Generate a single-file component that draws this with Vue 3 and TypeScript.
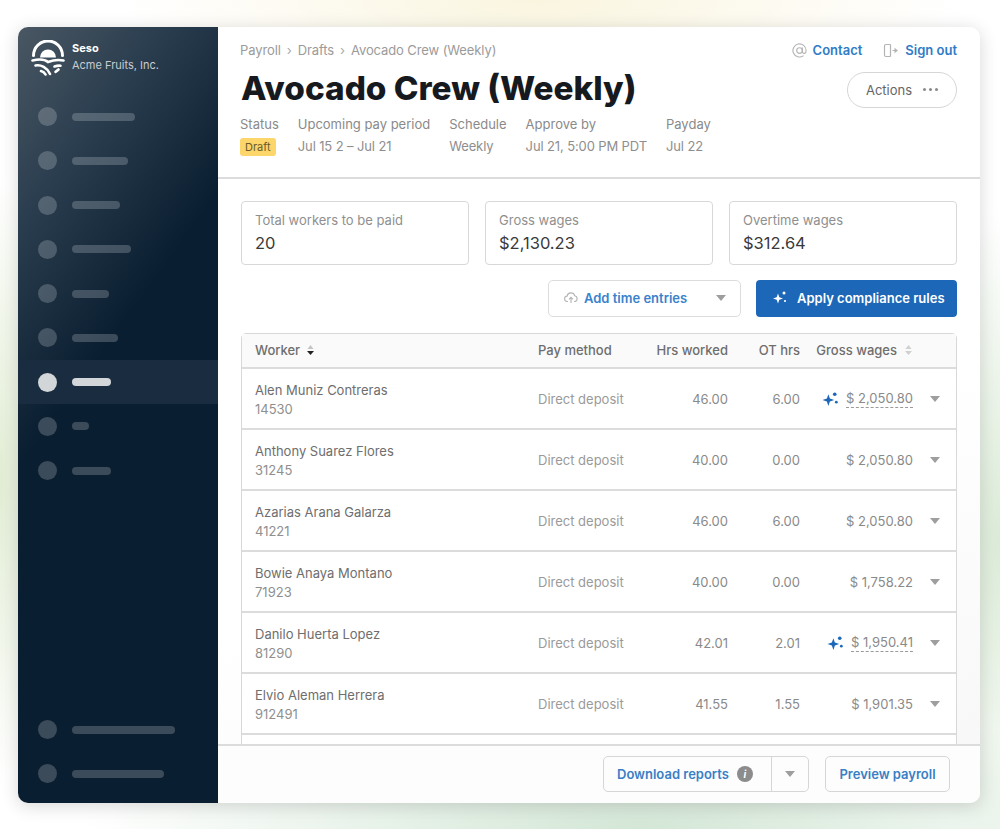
<script setup lang="ts">
const navTop = [63, 56, 48, 59, 37, 46, 39, 17, 39]
const navBottom = [103, 92]
const meta = [
  { label: 'Upcoming pay period', value: 'Jul 15 2 – Jul 21' },
  { label: 'Schedule', value: 'Weekly' },
  { label: 'Approve by', value: 'Jul 21, 5:00 PM PDT' },
  { label: 'Payday', value: 'Jul 22' },
]
const stats = [
  { label: 'Total workers to be paid', value: '20' },
  { label: 'Gross wages', value: '$2,130.23' },
  { label: 'Overtime wages', value: '$312.64' },
]
const rows = [
  { name: 'Alen Muniz Contreras', id: '14530', hrs: '46.00', ot: '6.00', gross: '$ 2,050.80', ai: true },
  { name: 'Anthony Suarez Flores', id: '31245', hrs: '40.00', ot: '0.00', gross: '$ 2,050.80', ai: false },
  { name: 'Azarias Arana Galarza', id: '41221', hrs: '46.00', ot: '6.00', gross: '$ 2,050.80', ai: false },
  { name: 'Bowie Anaya Montano', id: '71923', hrs: '40.00', ot: '0.00', gross: '$ 1,758.22', ai: false },
  { name: 'Danilo Huerta Lopez', id: '81290', hrs: '42.01', ot: '2.01', gross: '$ 1,950.41', ai: true },
  { name: 'Elvio Aleman Herrera', id: '912491', hrs: '41.55', ot: '1.55', gross: '$ 1,901.35', ai: false },
]
</script>

<template>
  <div class="page">
    <div class="card">
      <aside class="side">
        <div class="brand">
          <svg class="logo" width="34" height="36" viewBox="0 0 34 36" fill="none" stroke="#fff" stroke-width="2.600" stroke-linecap="round">
            <path d="M2.500 15.500A14.500 14.500 0 0 1 31.500 15.500" stroke-width="3" />
            <path d="M9 17.500A8 8 0 0 1 25 17.500Z" fill="#fff" stroke="none" />
            <path d="M1.500 20.500C8 19 14 19.500 17 22C21 20.500 27 19.500 32.500 20.500" />
            <path d="M4.500 25.500C10 24.500 16 27.500 19 34" />
            <path d="M10 31C12 31.500 13.500 32.500 14.500 34.500" />
            <path d="M23.500 26.500C25.500 25.800 27.500 25.500 29.500 25.700" />
            <path d="M24.500 31.800C25.800 31 26.800 30.200 27.500 29.500" />
          </svg>
          <div class="brand-text">
            <div class="brand-name">Seso</div>
            <div class="brand-org">Acme Fruits, Inc.</div>
          </div>
        </div>
        <nav class="nav">
          <div v-for="(w, i) in navTop" :key="i" class="nav-item" :class="{ active: i === 6 }">
            <span class="dot"></span>
            <span class="bar" :style="{ width: w + 'px' }"></span>
          </div>
        </nav>
        <div class="nav nav-bottom">
          <div v-for="(w, i) in navBottom" :key="i" class="nav-item">
            <span class="dot"></span>
            <span class="bar" :style="{ width: w + 'px' }"></span>
          </div>
        </div>
      </aside>

      <main class="main">
        <header class="head">
          <div class="head-left">
            <div class="crumbs">
              <span>Payroll</span><i>›</i><span>Drafts</span><i>›</i><span>Avocado Crew (Weekly)</span>
            </div>
            <h1 class="title">Avocado Crew (Weekly)</h1>
            <div class="meta">
              <div class="meta-col">
                <div class="meta-label">Status</div>
                <span class="badge">Draft</span>
              </div>
              <div v-for="m in meta" :key="m.label" class="meta-col">
                <div class="meta-label">{{ m.label }}</div>
                <div class="meta-value">{{ m.value }}</div>
              </div>
            </div>
          </div>
          <div class="head-right">
            <div class="links">
              <span class="link">
                <svg width="15" height="15" viewBox="0 0 16 16" fill="none" stroke="#b4b4b4" stroke-width="1.200">
                  <circle cx="8" cy="8" r="3" />
                  <path d="M11 5v4a2 2 0 0 0 3.500 1.300C15 9 15 8.500 15 8a7 7 0 1 0-3 5.700" stroke-linecap="round" />
                </svg>
                <b>Contact</b>
              </span>
              <span class="link">
                <svg width="16" height="15" viewBox="0 0 16 15" fill="none" stroke="#b4b4b4" stroke-width="1.200">
                  <path d="M7.500 1.500H3a1.500 1.500 0 0 0-1.500 1.500v9A1.500 1.500 0 0 0 3 13.500h4.500" />
                  <path d="M7.500 1.500v12" />
                  <path d="M9.500 7.500h3" />
                  <path d="M11.500 4.800l3.500 2.700-3.500 2.700z" fill="#b4b4b4" stroke="none" />
                </svg>
                <b>Sign out</b>
              </span>
            </div>
            <button class="actions">
              <span>Actions</span>
              <span class="dots"><i></i><i></i><i></i></span>
            </button>
          </div>
        </header>

        <div class="body">
          <div class="stats">
            <div v-for="s in stats" :key="s.label" class="stat">
              <div class="stat-label">{{ s.label }}</div>
              <div class="stat-value">{{ s.value }}</div>
            </div>
          </div>

          <div class="toolbar">
            <button class="btn-add">
              <svg width="14" height="13" viewBox="0 0 14 13" fill="none" stroke="#b4b4b4" stroke-width="1.100">
                <path d="M4 10.500H3.500a2.700 2.700 0 0 1-.4-5.400 3.900 3.900 0 0 1 7.600-.3 2.900 2.900 0 0 1 .1 5.700H10" />
                <path d="M7 12V6.500M5 8.300 7 6.300l2 2" />
              </svg>
              <b>Add time entries</b>
              <span class="caret add-caret"></span>
            </button>
            <button class="btn-apply">
              <svg class="spark" width="16" height="15" viewBox="0 0 16 15" fill="#fff">
                <path d="M6 3.500 7.300 7.200 11 8.500 7.300 9.800 6 13.500 4.700 9.800 1 8.500 4.700 7.200z" />
                <circle cx="12" cy="3" r="1.500" />
                <circle cx="13" cy="11" r="1.100" />
              </svg>
              <span>Apply compliance rules</span>
            </button>
          </div>

          <div class="table">
            <div class="tr th">
              <div class="worker-h">
                Worker
                <svg width="9" height="12" viewBox="0 0 9 12"><path d="M4.500 1 7.500 5h-6z" fill="#c4c4c4" /><path d="M4.500 11 1 7h7z" fill="#222" /></svg>
              </div>
              <div>Pay method</div>
              <div class="num">Hrs worked</div>
              <div class="num">OT hrs</div>
              <div class="gross-h">
                Gross wages
                <svg width="9" height="12" viewBox="0 0 9 12"><path d="M4.500 1 7.500 5h-6z" fill="#d0d0d0" /><path d="M4.500 11 1 7h7z" fill="#d0d0d0" /></svg>
              </div>
              <div></div>
            </div>
            <div v-for="r in rows" :key="r.id" class="tr td">
              <div class="w-cell">
                <div class="w-name">{{ r.name }}</div>
                <div class="w-id">{{ r.id }}</div>
              </div>
              <div class="pay">Direct deposit</div>
              <div class="num val">{{ r.hrs }}</div>
              <div class="num val">{{ r.ot }}</div>
              <div class="gross">
                <svg v-if="r.ai" class="spark-b" width="17" height="16" viewBox="0 0 16 15" fill="#1c67b8">
                  <path d="M6 3 7.400 7.100 11.500 8.500 7.400 9.900 6 14 4.600 9.900.5 8.500 4.600 7.100z" />
                  <circle cx="12" cy="3" r="1.700" />
                  <circle cx="13.500" cy="10.500" r="1.300" />
                </svg>
                <span class="val" :class="{ dashed: r.ai }">{{ r.gross }}</span>
              </div>
              <div class="chev"><span class="caret"></span></div>
            </div>
            <div class="tr td"></div>
          </div>
        </div>

        <footer class="foot">
          <div class="split">
            <button class="split-main">
              <b>Download reports</b>
              <span class="info">i</span>
            </button>
            <button class="split-caret"><span class="caret"></span></button>
          </div>
          <button class="preview">Preview payroll</button>
        </footer>
      </main>
    </div>
  </div>
</template>

<style>
html, body { margin: 0; padding: 0; }
</style>

<style scoped>
.page {
  box-sizing: border-box;
  width: 1000px;
  height: 829px;
  padding: 27px 20px 26px 18px;
  overflow: hidden;
  font-family: Inter, "Liberation Sans", sans-serif;
  background:
    radial-gradient(ellipse 420px 110px at 540px 0, #faf5df 0, rgba(250, 245, 223, 0) 100%),
    radial-gradient(ellipse 560px 130px at 640px 829px, #d3e7d6 0, rgba(211, 231, 214, 0) 100%),
    radial-gradient(ellipse 90px 330px at 1000px 540px, #dbebd7 0, rgba(219, 235, 215, 0) 100%),
    radial-gradient(ellipse 60px 300px at 0 480px, #e2edd4 0, rgba(226, 237, 212, 0) 100%),
    #fff;
}
.card {
  display: flex;
  height: 100%;
  border-radius: 10px;
  overflow: hidden;
  box-shadow: 0 3px 18px rgba(0, 0, 0, 0.16);
  background: #fff;
}
.side {
  flex: 0 0 200px;
  display: flex;
  flex-direction: column;
  background: linear-gradient(126deg, #4a5763 0, #2c3f50 18%, #0a1e31 42%);
}
.brand {
  display: flex;
  gap: 7px;
  padding: 13px 0 0 13px;
  height: 55px;
  box-sizing: border-box;
}
.logo { flex: none; }
.brand-text { color: #fff; font-size: 11px; line-height: 17px; padding-top: 0; }
.brand-name { font-weight: 700; }
.brand-org { color: #c6ccd2; white-space: nowrap; }
.nav { display: flex; flex-direction: column; padding-top: 12.500px; }
.nav-bottom { margin-top: auto; padding: 0 0 7px; }
.nav-item {
  display: flex;
  align-items: center;
  height: 44.250px;
  padding-left: 20px;
  gap: 15px;
}
.dot { width: 19px; height: 19px; border-radius: 50%; background: rgba(255, 255, 255, 0.2); }
.bar { height: 8px; border-radius: 4px; background: rgba(255, 255, 255, 0.2); }
.active { background: #1a2d40; }
.active .dot, .active .bar { background: #d3d6d9; }

.main { flex: 1; min-width: 0; display: flex; flex-direction: column; }
.head {
  flex: 0 0 152px;
  box-sizing: border-box;
  display: flex;
  justify-content: space-between;
  padding: 15px 23px 0 22px;
  border-bottom: 2px solid #dcdcdc;
}
.crumbs {
  display: flex;
  align-items: center;
  gap: 6px;
  font-size: 13px;
  letter-spacing: -0.1px;
  line-height: 16px;
  color: #9b9b9b;
}
.crumbs i { font-style: normal; color: #aaa; }
.title {
  margin: 10px 0 0 1px;
  font-size: 33.300px;
  line-height: 40px;
  font-weight: 800;
  color: #16191d;
  white-space: nowrap;
}
.meta { display: flex; margin-top: 8px; gap: 19px; }
.meta-col { display: flex; flex-direction: column; align-items: flex-start; gap: 5px; }
.meta-label { font-size: 13px; line-height: 17px; color: #8a8a8a; white-space: nowrap; }
.meta-value { font-size: 13px; letter-spacing: -0.12px; line-height: 17px; color: #8e8e8e; white-space: nowrap; }
.badge {
  font-size: 11px;
  line-height: 18px;
  padding: 0 5px;
  border-radius: 3px;
  background: #fcd56b;
  color: #6a5a2a;
}
.head-right { display: flex; flex-direction: column; align-items: flex-end; gap: 14px; }
.links { display: flex; gap: 21px; }
.link { display: flex; align-items: center; gap: 6px; font-size: 13px; line-height: 16px; }
.link b { font-weight: 600; color: #2f7cc7; }
.actions {
  display: flex;
  align-items: center;
  justify-content: center;
  gap: 11px;
  width: 110px;
  height: 36px;
  padding-bottom: 2px;
  border: 1px solid #d6d6d6;
  border-radius: 18px;
  background: #fff;
  font: 13px Inter, sans-serif;
  color: #666;
}
.dots { display: flex; gap: 3px; }
.dots i { width: 3px; height: 3px; border-radius: 50%; background: #8a8a8a; }

.body { flex: 1; min-height: 0; overflow: hidden; padding: 22px 23px 0 23px; background: linear-gradient(160deg, #fff 55%, #f8f8f8 100%); }
.stats { display: grid; grid-template-columns: repeat(3, 1fr); gap: 16px; }
.stat {
  box-sizing: border-box;
  height: 64px;
  padding: 10px 13px;
  border: 1px solid #d8d8d8;
  border-radius: 4px;
  background: #fff;
}
.stat-label { font-size: 13px; line-height: 17px; color: #8f8f8f; white-space: nowrap; }
.stat-value { margin-top: 4px; font-size: 16.500px; line-height: 20px; color: #3a3a3a; }
.toolbar { display: flex; justify-content: flex-end; gap: 15px; margin-top: 15px; }
.btn-add {
  display: flex;
  align-items: center;
  box-sizing: border-box;
  width: 193px;
  height: 37px;
  padding: 0 14px 2px 15px;
  border: 1px solid #dcdcdc;
  border-radius: 5px;
  background: #fff;
  font: 13px Inter, sans-serif;
}
.btn-add b { margin-left: 6px; font-weight: 600; color: #3a82cb; white-space: nowrap; }
.add-caret { margin-left: auto; }
.btn-apply {
  display: flex;
  align-items: center;
  gap: 9px;
  box-sizing: border-box;
  width: 201px;
  height: 37px;
  padding: 0 0 2px 16px;
  border: 0;
  border-radius: 4px;
  background: #1c67b8;
  color: #fff;
  font: 600 13px Inter, sans-serif;
  white-space: nowrap;
}
.table {
  margin-top: 16px;
  border: 1px solid #d8d8d8;
  border-radius: 5px 5px 0 0;
  background: #fff;
}
.tr {
  display: grid;
  grid-template-columns: 283px 105px 85px 72px 113px 1fr;
  align-items: center;
  padding-left: 13px;
  border-bottom: 2px solid #dcdcdc;
}
.th {
  height: 35px;
  box-sizing: border-box;
  padding-bottom: 2px;
  background: #fafafa;
  font-size: 13px;
  font-weight: 500;
  color: #6e6e6e;
  white-space: nowrap;
}
.worker-h { display: flex; align-items: center; gap: 6px; }
.gross-h { display: flex; align-items: center; justify-content: flex-end; gap: 7px; justify-self: end; }
.td { height: 61px; box-sizing: border-box; font-size: 13px; }
.w-cell { padding-top: 2px; }
.w-name { line-height: 19px; color: #6e6e6e; white-space: nowrap; }
.w-id { line-height: 19px; color: #8f8f8f; }
.pay { color: #9a9a9a; white-space: nowrap; }
.num { text-align: right; }
.val { color: #8a8a8a; white-space: nowrap; }
.gross { display: flex; align-items: center; justify-content: flex-end; gap: 7px; }
.dashed { border-bottom: 1px dashed #9a9a9a; line-height: 17px; }
.chev { display: flex; justify-content: center; padding-left: 1px; }
.caret {
  display: inline-block;
  width: 0;
  height: 0;
  border-left: 5px solid transparent;
  border-right: 5px solid transparent;
  border-top: 6px solid #9e9e9e;
}
.foot {
  flex: 0 0 59px;
  box-sizing: border-box;
  display: flex;
  justify-content: flex-end;
  align-items: center;
  gap: 16px;
  padding: 0 30px 2px 0;
  border-top: 2px solid #dcdcdc;
  background: #fdfdfd;
  position: relative;
}
.split { display: flex; height: 36px; border: 1px solid #d6d6d6; border-radius: 5px; box-sizing: border-box; }
.split-main {
  display: flex;
  align-items: center;
  gap: 8px;
  width: 168px;
  padding: 0 0 0 13px;
  border: 0;
  background: transparent;
  border-right: 1px solid #d6d6d6;
  font: 13px Inter, sans-serif;
}
.split-main b { font-weight: 600; color: #3a7fc5; white-space: nowrap; }
.info {
  width: 16px;
  height: 16px;
  border-radius: 50%;
  background: #8c8c8c;
  color: #fff;
  font: italic 700 10px/16px Inter, sans-serif;
  text-align: center;
}
.split-caret { width: 36px; border: 0; background: transparent; display: flex; align-items: center; justify-content: center; }
.preview {
  box-sizing: border-box;
  width: 125px;
  height: 36px;
  border: 1px solid #d6d6d6;
  border-radius: 5px;
  background: transparent;
  color: #3a7fc5;
  font: 600 13px Inter, sans-serif;
  white-space: nowrap;
}
</style>
